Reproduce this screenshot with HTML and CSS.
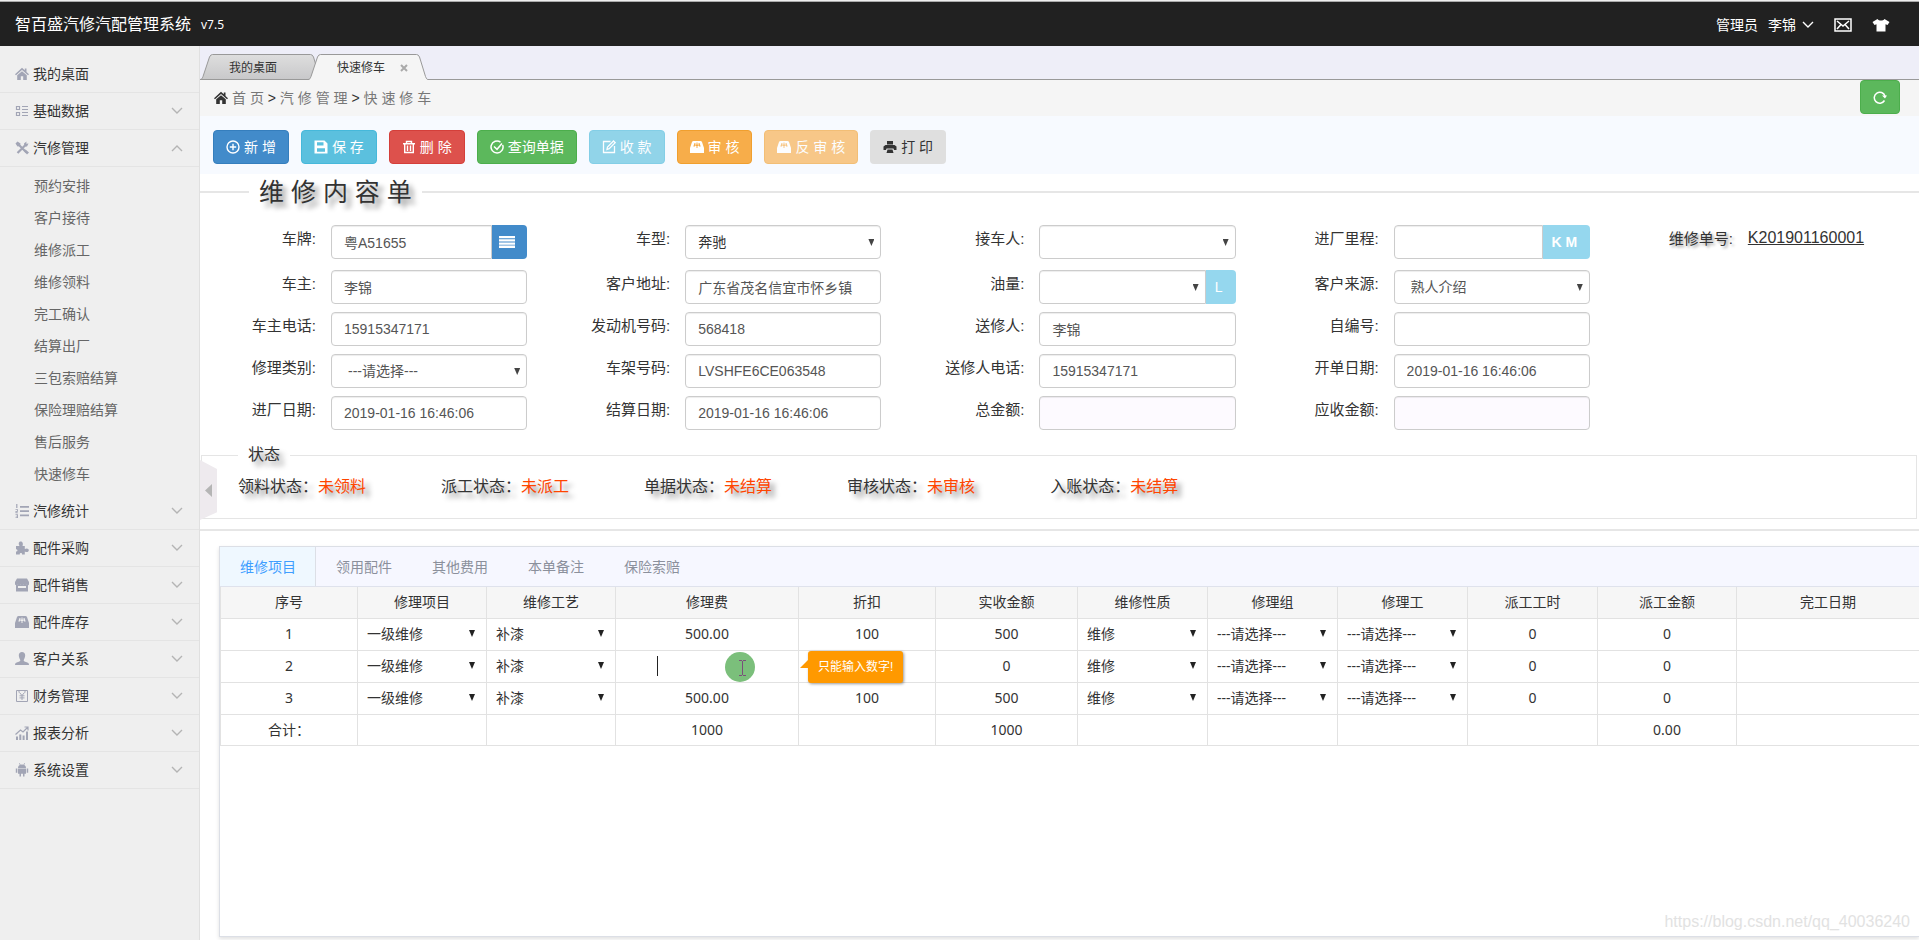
FILE: index.html
```html
<!DOCTYPE html>
<html lang="zh-CN">
<head>
    <meta charset="UTF-8">
    <meta name="viewport" content="width=device-width, initial-scale=1.0">
    <title>智百盛汽修汽配管理系统</title>
    <link rel="stylesheet" href="styles.css">
</head>
<body>
    <!-- 图标 -->
    <svg class="sprite" aria-hidden="true">
        <symbol id="i-home" viewBox="0 0 14 14"><path d="M7 0.8 0 7.2l1 1L7 3l6 5.200 1-1-2.500-2.300V1.500H9.800v1.800z"/><path d="M7 4.200 2.200 8.300V13h3.600V9.300h2.400V13h3.600V8.300z"/></symbol>
        <symbol id="i-data" viewBox="0 0 14 14"><path fill="none" stroke="currentColor" stroke-width="1.200" d="M1.500 2.500h3v3h-3zM1.500 8.500h3v3h-3zM7 2.500h6M7 5.500h6M7 8.500h6M7 11.500h6"/></symbol>
        <symbol id="i-tools" viewBox="0 0 14 14"><path fill="none" stroke="currentColor" stroke-width="2.200" d="M3 3l8.500 8.500M11 3.500 2.500 12"/><path d="M0.500 2.500 2.500 0.500 5.500 2.500 5 5 2.500 5.500zM9 2.500 11.500 0.500 11.300 2.700 13.500 2.500 12 5.500 9.500 5.500zM9 10l1.500-1.500 3.500 3-2 2z"/></symbol>
        <symbol id="i-list" viewBox="0 0 14 14"><path d="M5 2h9v1.800H5zM5 6.200h9V8H5zM5 10.500h9v1.800H5zM1.200 0h1.200v4H1.200zM0.500 5.200h2.500v2.500H1.500v.8H3v.8H.5V7h1.600v-.9H.5zM.5 10.300H3V14H.5v-.8h1.600v-.7H.8v-.8h1.300v-.6H.5z"/></symbol>
        <symbol id="i-puzzle" viewBox="0 0 14 14"><path d="M1 5h3.500C3 2.500 4 0.500 5.700 0.500S8.500 2.500 7.500 5h2.300v3c2-1.200 4-.5 4 1.300s-2 2.300-4 1.200V13.500H7c.7-2-2.800-2-2.200 0H1v-3c2 .6 2-2.900 0-2.300z"/></symbol>
        <symbol id="i-shop" viewBox="0 0 14 14"><path d="M2 0.500h10L14 4v2.500c-1 1.200-2.200 1-2.800 0-.8 1.200-2 1-2.800 0-.8 1-2 1-2.800 0-.8 1-2 1.200-2.800 0-.8 1-2.100.8-2.800 0V4z"/><path fill-rule="evenodd" d="M1 6.500h12v7H1zM3 8v2h8V8z"/></symbol>
        <symbol id="i-box" viewBox="0 0 14 14"><path fill-rule="evenodd" d="M3.500 1h7q1 0 1.500 1l2 6v5H0V8l2-6q.5-1 1.500-1zM4.500 3 3.300 6.500h1.700L5.500 3zM8.500 3 9 6.500h1.700L9.500 3zM6.500 2.500v2h-1V6h1v2h1V6h1V4.500h-1v-2z"/></symbol>
        <symbol id="i-user" viewBox="0 0 14 14"><path d="M7 0c2 0 3.200 1.300 3.200 3.300S9 7.500 8.700 8.200c0 1 .8 1.300 2.300 1.800 2 .6 3 1.200 3 3H0c0-1.800 1-2.400 3-3 1.500-.5 2.300-.8 2.300-1.800C5 7.500 3.800 5.300 3.800 3.300S5 0 7 0z"/></symbol>
        <symbol id="i-money" viewBox="0 0 14 14"><path fill="none" stroke="currentColor" d="M1.500 1.500h11v11h-11zM4.500 3.500 7 6.500l2.500-3M7 6.500V11M4.500 6.800h5M4.500 8.900h5M4 1.500v2M10 1.500v2"/></symbol>
        <symbol id="i-chart" viewBox="0 0 14 14"><path d="M1 10.500h2V14H1zM4.300 8.500h2V14h-2zM7.600 9.500h2V14h-2zM11 5.500h2V14h-2z"/><path fill="none" stroke="currentColor" stroke-width="1.200" d="M.5 8.500 5.500 4l2.500 2 4.500-4.500M9.500 1H13v3.500"/></symbol>
        <symbol id="i-robot" viewBox="0 0 14 14"><path d="M3 5a4 3.500 0 0 1 8 0zM3 5.600h8v5.200H9.500V13.500H8v-2.700H6v2.700H4.500v-2.700H3zM.8 5.500h1.500v4.200H.8zM11.700 5.500h1.500v4.200h-1.500zM4 .5l.6-.4 1 1.700-.7.3zM10 .5 9.400.1l-1 1.700.7.3z"/></symbol>
        <symbol id="i-down" viewBox="0 0 12 8"><path fill="none" stroke="currentColor" stroke-width="1.400" d="M1 1l5 5 5-5"/></symbol>
        <symbol id="i-up" viewBox="0 0 12 8"><path fill="none" stroke="currentColor" stroke-width="1.400" d="M1 7l5-5 5 5"/></symbol>
        <symbol id="i-mail" viewBox="0 0 18 14"><path fill="none" stroke="currentColor" stroke-width="1.500" d="M1 1h16v12H1zM3 3l6 5 6-5M3 11l4-4.500M15 11l-4-4.500"/></symbol>
        <symbol id="i-shirt" viewBox="0 0 18 14"><path d="M5.500 1C7 3 11 3 12.500 1L17.500 4 15.500 7 13.500 6.200V13.500h-9V6.200L2.500 7 .5 4z"/></symbol>
        <symbol id="i-plus" viewBox="0 0 14 14"><g fill="none" stroke="currentColor" stroke-width="1.400"><circle cx="7" cy="7" r="6"/><path d="M7 3.800v6.400M3.800 7h6.400"/></g></symbol>
        <symbol id="i-save" viewBox="0 0 14 14"><path fill-rule="evenodd" d="M.5.5h10L13.500 3.500v10H.5zM3 2.200v3.300h6.500V2.200zM3 8.200v3.600h8V8.200z"/></symbol>
        <symbol id="i-trash" viewBox="0 0 14 14"><g fill="none" stroke="currentColor" stroke-width="1.400"><path d="M1 3.700h12M4.500 3.500V1.500h5v2M2.700 4v8.500h8.600V4M5.500 5.500v5.500M8.500 5.500v5.500"/></g></symbol>
        <symbol id="i-check" viewBox="0 0 14 14"><g fill="none" stroke="currentColor" stroke-width="1.500"><path d="M12.700 5A6 6 0 1 1 10.500 2.100"/><path d="M4 6.500 7 9.300 12 3.500"/></g></symbol>
        <symbol id="i-edit" viewBox="0 0 14 14"><g fill="none" stroke="currentColor" stroke-width="1.300"><path d="M8.500 1.500h-7v11h11V6"/><path d="M5 9.500 5.500 7 11.500 1l1.700 1.700-6 6z"/></g></symbol>
        <symbol id="i-print" viewBox="0 0 14 14"><path fill-rule="evenodd" d="M4 1h6v3.500H4zM2.500 5h9L13.500 6.500V10h-2.500L10.500 8.500h-7L3 10H.5V6.500zM4.500 9.500h5l1 3.500h-7z"/></symbol>
        <symbol id="i-rows" viewBox="0 0 16 12"><path d="M0 0h16v2.300H0zM0 3.200h16v2.300H0zM0 6.400h16v2.300H0zM0 9.600h16V12H0z"/></symbol>
        <symbol id="i-refresh" viewBox="0 0 14 14"><path fill="none" stroke="currentColor" stroke-width="1.500" d="M11.500 10.500A5.500 5.500 0 1 1 12 6"/><path d="M9 5.500h5L12 8.500z"/></symbol>
    </svg>

    <header class="header">
        <h1 class="logo">智百盛汽修汽配管理系统</h1>
        <span class="version">v7.5</span>
        <nav class="user-nav">
            <span>管理员</span>
            <a href="#">李锦 <svg class="arrow"><use href="#i-down"/></svg></a>
            <a href="#" aria-label="消息"><svg class="tool"><use href="#i-mail"/></svg></a>
            <a href="#" aria-label="换肤"><svg class="tool"><use href="#i-shirt"/></svg></a>
        </nav>
    </header>

    <div class="wrapper">
        <aside class="sidebar">
            <a class="menu-item" href="#"><svg class="icon"><use href="#i-home"/></svg>我的桌面</a>
            <a class="menu-item" href="#"><svg class="icon"><use href="#i-data"/></svg>基础数据<svg class="arrow"><use href="#i-down"/></svg></a>
            <a class="menu-item" href="#"><svg class="icon"><use href="#i-tools"/></svg>汽修管理<svg class="arrow"><use href="#i-up"/></svg></a>
            <ul class="submenu">
                <li><a href="#">预约安排</a></li>
                <li><a href="#">客户接待</a></li>
                <li><a href="#">维修派工</a></li>
                <li><a href="#">维修领料</a></li>
                <li><a href="#">完工确认</a></li>
                <li><a href="#">结算出厂</a></li>
                <li><a href="#">三包索赔结算</a></li>
                <li><a href="#">保险理赔结算</a></li>
                <li><a href="#">售后服务</a></li>
                <li><a href="#">快速修车</a></li>
            </ul>
            <a class="menu-item" href="#"><svg class="icon"><use href="#i-list"/></svg>汽修统计<svg class="arrow"><use href="#i-down"/></svg></a>
            <a class="menu-item" href="#"><svg class="icon"><use href="#i-puzzle"/></svg>配件采购<svg class="arrow"><use href="#i-down"/></svg></a>
            <a class="menu-item" href="#"><svg class="icon"><use href="#i-shop"/></svg>配件销售<svg class="arrow"><use href="#i-down"/></svg></a>
            <a class="menu-item" href="#"><svg class="icon"><use href="#i-box"/></svg>配件库存<svg class="arrow"><use href="#i-down"/></svg></a>
            <a class="menu-item" href="#"><svg class="icon"><use href="#i-user"/></svg>客户关系<svg class="arrow"><use href="#i-down"/></svg></a>
            <a class="menu-item" href="#"><svg class="icon"><use href="#i-money"/></svg>财务管理<svg class="arrow"><use href="#i-down"/></svg></a>
            <a class="menu-item" href="#"><svg class="icon"><use href="#i-chart"/></svg>报表分析<svg class="arrow"><use href="#i-down"/></svg></a>
            <a class="menu-item" href="#"><svg class="icon"><use href="#i-robot"/></svg>系统设置<svg class="arrow"><use href="#i-down"/></svg></a>
        </aside>

        <main class="main">
            <button class="collapse" type="button" aria-label="收起菜单"></button>

            <div class="page-tabs">
                <a class="page-tab" href="#">
                    <svg class="tab-shape" viewBox="0 0 120 26"><defs><linearGradient id="tabFill" x2="0" y2="1"><stop offset="0" stop-color="#dedede"/><stop offset="1" stop-color="#c8c8ca"/></linearGradient></defs><path fill="url(#tabFill)" stroke="#999" d="M0 25.500c2 0 2-1 3-3L9.500 3q1-2.500 3-2.500h98q2 0 3 2.500l6 20q1 2 1 2.500z"/></svg>
                    <span>我的桌面</span>
                </a>
                <a class="page-tab active" href="#">
                    <svg class="tab-shape" viewBox="0 0 120 26"><path fill="#f5f5f5" stroke="#999" d="M0 25.500c2 0 2-1 3-3L9.500 3q1-2.500 3-2.500h96q2 0 3 2.500l6 19.500c1 2 1 3 3 3V27H0z"/></svg>
                    <span>快速修车</span>
                    <svg class="tab-close" viewBox="0 0 8 8"><path fill="none" stroke="#aaa" stroke-width="2" d="M1 1l6 6M7 1 1 7"/></svg>
                </a>
            </div>

            <div class="breadcrumb">
                <svg class="icon"><use href="#i-home"/></svg>
                <span>首 页 <b>&gt;</b> 汽 修 管 理 <b>&gt;</b> 快 速 修 车</span>
                <button class="btn btn-success refresh" type="button" aria-label="刷新"><svg class="icon"><use href="#i-refresh"/></svg></button>
            </div>

            <div class="toolbar">
                <button class="btn btn-primary" type="button"><svg class="icon"><use href="#i-plus"/></svg>新 增</button>
                <button class="btn btn-info" type="button"><svg class="icon"><use href="#i-save"/></svg>保 存</button>
                <button class="btn btn-danger" type="button"><svg class="icon"><use href="#i-trash"/></svg>删 除</button>
                <button class="btn btn-success" type="button"><svg class="icon"><use href="#i-check"/></svg>查询单据</button>
                <button class="btn btn-info" type="button" disabled><svg class="icon"><use href="#i-edit"/></svg>收 款</button>
                <button class="btn btn-warning" type="button"><svg class="icon"><use href="#i-box"/></svg>审 核</button>
                <button class="btn btn-warning" type="button" disabled><svg class="icon"><use href="#i-box"/></svg>反 审 核</button>
                <button class="btn btn-default" type="button"><svg class="icon"><use href="#i-print"/></svg>打 印</button>
            </div>

            <form class="order">
                <div class="order-title"><h2>维 修 内 容 单</h2></div>

                <div class="form-grid first">
                    <div class="field">
                        <label for="plate">车牌:</label>
                        <div class="group">
                            <input class="control" type="text" id="plate" value="粤A51655">
                            <button class="addon addon-primary" type="button" aria-label="选择车牌"><svg><use href="#i-rows"/></svg></button>
                        </div>
                    </div>
                    <div class="field">
                        <label for="model">车型:</label>
                        <div class="select dark"><select class="control" id="model"><option>奔驰</option></select></div>
                    </div>
                    <div class="field">
                        <label for="receiver">接车人:</label>
                        <div class="select"><select class="control" id="receiver"><option></option></select></div>
                    </div>
                    <div class="field">
                        <label for="mileage">进厂里程:</label>
                        <div class="group">
                            <input class="control" type="text" id="mileage">
                            <span class="addon addon-km">K M</span>
                        </div>
                    </div>
                    <div class="field">
                        <span class="label shadow">维修单号:</span>
                        <a class="order-no" href="#">K201901160001</a>
                    </div>
                </div>

                <div class="form-grid">
                    <div class="field">
                        <label for="owner">车主:</label>
                        <input class="control" type="text" id="owner" value="李锦">
                    </div>
                    <div class="field">
                        <label for="address">客户地址:</label>
                        <input class="control" type="text" id="address" value="广东省茂名信宜市怀乡镇">
                    </div>
                    <div class="field">
                        <label for="oil">油量:</label>
                        <div class="group">
                            <div class="select"><select class="control" id="oil"><option></option></select></div>
                            <span class="addon addon-l">L</span>
                        </div>
                    </div>
                    <div class="field">
                        <label for="source">客户来源:</label>
                        <div class="select"><select class="control" id="source"><option>熟人介绍</option></select></div>
                    </div>
                </div>

                <div class="form-grid">
                    <div class="field">
                        <label for="ownerTel">车主电话:</label>
                        <input class="control" type="text" id="ownerTel" value="15915347171">
                    </div>
                    <div class="field">
                        <label for="engine">发动机号码:</label>
                        <input class="control" type="text" id="engine" value="568418">
                    </div>
                    <div class="field">
                        <label for="sender">送修人:</label>
                        <input class="control" type="text" id="sender" value="李锦">
                    </div>
                    <div class="field">
                        <label for="selfNo">自编号:</label>
                        <input class="control" type="text" id="selfNo">
                    </div>
                </div>

                <div class="form-grid">
                    <div class="field">
                        <label for="repairType">修理类别:</label>
                        <div class="select"><select class="control" id="repairType"><option>---请选择---</option></select></div>
                    </div>
                    <div class="field">
                        <label for="vin">车架号码:</label>
                        <input class="control" type="text" id="vin" value="LVSHFE6CE063548">
                    </div>
                    <div class="field">
                        <label for="senderTel">送修人电话:</label>
                        <input class="control" type="text" id="senderTel" value="15915347171">
                    </div>
                    <div class="field">
                        <label for="openDate">开单日期:</label>
                        <input class="control" type="text" id="openDate" value="2019-01-16 16:46:06">
                    </div>
                </div>

                <div class="form-grid">
                    <div class="field">
                        <label for="inDate">进厂日期:</label>
                        <input class="control" type="text" id="inDate" value="2019-01-16 16:46:06">
                    </div>
                    <div class="field">
                        <label for="settleDate">结算日期:</label>
                        <input class="control" type="text" id="settleDate" value="2019-01-16 16:46:06">
                    </div>
                    <div class="field">
                        <label for="total">总金额:</label>
                        <input class="control readonly" type="text" id="total" readonly>
                    </div>
                    <div class="field">
                        <label for="receivable">应收金额:</label>
                        <input class="control readonly" type="text" id="receivable" readonly>
                    </div>
                </div>

                <fieldset class="status">
                    <legend>状态</legend>
                    <div class="status-list">
                        <span>领料状态：<em>未领料</em></span>
                        <span>派工状态：<em>未派工</em></span>
                        <span>单据状态：<em>未结算</em></span>
                        <span>审核状态：<em>未审核</em></span>
                        <span>入账状态：<em>未结算</em></span>
                    </div>
                </fieldset>
            </form>

            <section class="panel">
                <div class="panel-tabs">
                    <a class="active" href="#">维修项目</a>
                    <a href="#">领用配件</a>
                    <a href="#">其他费用</a>
                    <a href="#">本单备注</a>
                    <a href="#">保险索赔</a>
                </div>
                <table class="items">
                    <colgroup>
                        <col class="w-no"><col class="w-sel"><col class="w-sel"><col class="w-fee"><col class="w-no"><col class="w-amt">
                        <col class="w-mid"><col class="w-mid"><col class="w-mid"><col class="w-mid"><col class="w-pay"><col>
                    </colgroup>
                    <thead>
                        <tr>
                            <th>序号</th><th>修理项目</th><th>维修工艺</th><th>修理费</th><th>折扣</th><th>实收金额</th>
                            <th>维修性质</th><th>修理组</th><th>修理工</th><th>派工工时</th><th>派工金额</th><th>完工日期</th>
                        </tr>
                    </thead>
                    <tbody>
                        <tr>
                            <td>1</td>
                            <td><div class="select"><select aria-label="修理项目"><option>一级维修</option></select></div></td>
                            <td><div class="select"><select aria-label="维修工艺"><option>补漆</option></select></div></td>
                            <td><input class="fee" type="text" value="500.00" aria-label="修理费"></td>
                            <td>100</td>
                            <td>500</td>
                            <td><div class="select"><select aria-label="维修性质"><option>维修</option></select></div></td>
                            <td><div class="select"><select aria-label="修理组"><option>---请选择---</option></select></div></td>
                            <td><div class="select"><select aria-label="修理工"><option>---请选择---</option></select></div></td>
                            <td>0</td>
                            <td>0</td>
                            <td></td>
                        </tr>
                        <tr>
                            <td>2</td>
                            <td><div class="select"><select aria-label="修理项目"><option>一级维修</option></select></div></td>
                            <td><div class="select"><select aria-label="维修工艺"><option>补漆</option></select></div></td>
                            <td class="editing">
                                <input class="fee current" type="text" aria-label="修理费">
                                <svg class="pointer" viewBox="0 0 30 30"><circle cx="15" cy="15" r="15" fill="#7bbf7b"/><path fill="none" stroke="#7a4f7a" d="M14 8.500h3m1 0h3M17.500 9v14M14 23.500h3m1 0h3"/></svg>
                                <div class="tip">只能输入数字!</div>
                            </td>
                            <td></td>
                            <td>0</td>
                            <td><div class="select"><select aria-label="维修性质"><option>维修</option></select></div></td>
                            <td><div class="select"><select aria-label="修理组"><option>---请选择---</option></select></div></td>
                            <td><div class="select"><select aria-label="修理工"><option>---请选择---</option></select></div></td>
                            <td>0</td>
                            <td>0</td>
                            <td></td>
                        </tr>
                        <tr>
                            <td>3</td>
                            <td><div class="select"><select aria-label="修理项目"><option>一级维修</option></select></div></td>
                            <td><div class="select"><select aria-label="维修工艺"><option>补漆</option></select></div></td>
                            <td><input class="fee" type="text" value="500.00" aria-label="修理费"></td>
                            <td>100</td>
                            <td>500</td>
                            <td><div class="select"><select aria-label="维修性质"><option>维修</option></select></div></td>
                            <td><div class="select"><select aria-label="修理组"><option>---请选择---</option></select></div></td>
                            <td><div class="select"><select aria-label="修理工"><option>---请选择---</option></select></div></td>
                            <td>0</td>
                            <td>0</td>
                            <td></td>
                        </tr>
                    </tbody>
                    <tfoot>
                        <tr>
                            <td>合计：</td><td></td><td></td><td>1000</td><td></td><td>1000</td>
                            <td></td><td></td><td></td><td></td><td>0.00</td><td></td>
                        </tr>
                    </tfoot>
                </table>
            </section>
            <div class="watermark">https://blog.csdn.net/qq_40036240</div>
        </main>
    </div>
</body>
</html>
```

FILE: styles.css
```css
* {
    box-sizing: border-box;
    margin: 0;
    padding: 0;
}
body {
    display: flex;
    flex-direction: column;
    min-height: 100vh;
    font-family: "Liberation Sans", "Noto Sans CJK SC", sans-serif;
    font-size: 14px;
    line-height: 20px;
    color: #333;
    background-color: #fff;
}
a {
    color: inherit;
    text-decoration: none;
}
input, select, button {
    font: inherit;
    color: inherit;
}
svg {
    fill: currentColor;
    flex-shrink: 0;
}
.sprite {
    position: absolute;
    width: 0;
    height: 0;
}
.icon {
    width: 14px;
    height: 14px;
}
.arrow {
    width: 12px;
    height: 8px;
}

/* 顶部 */
.header {
    display: flex;
    align-items: center;
    height: 46px;
    padding: 2px 29px 0 15px;
    border-top: 1px solid #eee;
    box-shadow: inset 0 1px #aaa;
    background-color: #212121;
    color: #fff;
}
.logo {
    font-size: 16px;
    font-weight: normal;
}
.version {
    margin-left: 10px;
    font-family: "Noto Sans", sans-serif;
    font-size: 12px;
}
.user-nav {
    display: flex;
    align-items: center;
    gap: 10px;
    margin-left: auto;
}
.user-nav a {
    display: flex;
    align-items: center;
    gap: 6px;
}
.user-nav .tool {
    width: 18px;
    height: 14px;
    margin-left: 10px;
}

.wrapper {
    display: flex;
    flex: 1;
}

/* 左侧菜单 */
.sidebar {
    width: 200px;
    flex-shrink: 0;
    padding-top: 10px;
    background-color: #efefef;
    border-right: 1px solid #e0e0e0;
}
.menu-item {
    display: flex;
    align-items: center;
    height: 37px;
    padding: 0 16px 0 15px;
    border-bottom: 1px solid #e4e4e4;
}
.menu-item .icon {
    margin-right: 4px;
    color: #a2a5b5;
}
.menu-item .arrow {
    margin-left: auto;
    color: #b4b4b4;
}
.submenu {
    list-style: none;
    padding: 3px 0;
}
.submenu a {
    display: block;
    padding-left: 34px;
    line-height: 32px;
    color: #666;
}

.main {
    position: relative;
    display: flex;
    flex-direction: column;
    flex: 1;
    min-width: 0;
    padding-bottom: 3px;
    background-color: #fff;
}
.collapse {
    position: absolute;
    left: 0;
    top: 414px;
    width: 17px;
    height: 60px;
    border: none;
    background-color: #eeeaee;
    clip-path: polygon(0 0, 100% 15%, 100% 87%, 0 100%);
}
.collapse::after {
    content: "";
    position: absolute;
    left: 5px;
    top: 24px;
    width: 7px;
    height: 13px;
    background-color: #b5b5b5;
    clip-path: polygon(100% 0, 100% 100%, 0 50%);
}

/* 页签 */
.page-tabs {
    display: flex;
    align-items: flex-end;
    height: 34px;
    background-color: #eeeef8;
    border-bottom: 1px solid #999;
}
.page-tab {
    position: relative;
    display: flex;
    align-items: center;
    width: 120px;
    height: 26px;
    margin-bottom: -1px;
    padding: 2px 0 0 29px;
    font-size: 12px;
}
.page-tab.active {
    margin-left: -12px;
}
.page-tab span {
    position: relative;
}
.tab-shape {
    position: absolute;
    left: 0;
    top: 0;
    width: 120px;
    height: 26px;
}
.tab-close {
    position: relative;
    width: 8px;
    height: 8px;
    margin-left: 15px;
}

.breadcrumb {
    display: flex;
    align-items: center;
    height: 36px;
    padding: 0 19px 0 14px;
    background-color: #f5f5f5;
    color: #777;
}
.breadcrumb > .icon {
    margin-right: 4px;
    color: #333;
}
.breadcrumb b {
    font-weight: normal;
    color: #333;
}

/* 按钮 */
.toolbar {
    display: flex;
    gap: 12px;
    padding: 14px 13px 10px;
    background-color: #f7faff;
}
.btn {
    display: inline-flex;
    align-items: center;
    justify-content: center;
    gap: 4px;
    height: 34px;
    padding: 0 12px;
    border: 1px solid transparent;
    border-radius: 4px;
    color: #fff;
}
.btn:disabled {
    opacity: 0.65;
}
.btn-primary {
    background-color: #428bca;
    border-color: #357ebd;
}
.btn-info {
    background-color: #5bc0de;
    border-color: #46b8da;
}
.btn-danger {
    background-color: #dd514c;
    border-color: #d43f3a;
}
.btn-success {
    background-color: #5cb85c;
    border-color: #4cae4c;
}
.btn-warning {
    background-color: #f7ad4a;
    border-color: #f09f2e;
}
.btn-default {
    background-color: #dfdfdf;
    color: #333;
}
.refresh {
    width: 40px;
    margin-left: auto;
    margin-bottom: 2px;
}

/* 单据表单 */
.order {
    padding-bottom: 10px;
    border-bottom: 2px solid #e6e6e6;
}
.order-title {
    display: flex;
    align-items: center;
    height: 36px;
    margin-bottom: 15px;
}
.order-title::before,
.order-title::after {
    content: "";
    width: 49px;
    height: 2px;
    background-color: #e6e6e6;
}
.order-title::after {
    flex: 1;
}
.order-title h2 {
    padding: 0 10px;
    font-size: 25px;
    line-height: 36px;
    font-weight: normal;
    text-shadow: 5px 5px 5px #999;
}
.form-grid {
    display: grid;
    grid-template-columns: repeat(4, 354fr) 302fr;
    margin-bottom: 8px;
}
.form-grid.first {
    margin-bottom: 11px;
}
.field {
    display: grid;
    grid-template-columns: 116px minmax(0, 1fr);
    column-gap: 15px;
    padding-right: 27px;
}
.field label,
.field .label {
    font-size: 15px;
    line-height: 28px;
    text-align: right;
}
.field .shadow {
    text-shadow: 2px 2px 3px #999;
}
.order-no {
    font-size: 16px;
    line-height: 26px;
    text-decoration: underline;
}
.control {
    width: 100%;
    height: 34px;
    padding: 0 12px;
    border: 1px solid #ccc;
    border-radius: 4px;
    background-color: #fff;
    box-shadow: inset 0 1px 1px rgba(0, 0, 0, 0.075);
    color: #555;
}
.control.readonly {
    background-color: #fdfaff;
}
.select {
    position: relative;
    width: 100%;
}
.select select {
    appearance: none;
    outline: none;
}
.select select.control {
    padding-left: 16px;
}
.select.dark select.control {
    padding-left: 12px;
    color: #333;
}
.select::after {
    content: "";
    position: absolute;
    right: 7px;
    top: 14px;
    width: 6px;
    height: 7px;
    background-color: #444;
    clip-path: polygon(0 0, 100% 0, 50% 100%);
    pointer-events: none;
}
.group {
    display: flex;
}
.group .control {
    border-radius: 4px 0 0 4px;
}
.addon {
    display: flex;
    align-items: center;
    justify-content: center;
    flex-shrink: 0;
    height: 34px;
    border: none;
    border-radius: 0 4px 4px 0;
    background-color: #95d7ee;
    color: #fff;
}
.addon-primary {
    width: 35px;
    padding-right: 5px;
    background-color: #428bca;
}
.addon-primary svg {
    width: 16px;
    height: 12px;
}
.addon-km {
    width: 47px;
    padding-right: 4px;
    font-weight: bold;
}
.addon-l {
    width: 30px;
    padding-right: 4px;
}

/* 状态 */
.status {
    margin: 14px 2px 0 1px;
    padding: 0 0 20px 36px;
    border: 1px solid #e5e5e5;
}
.status legend {
    padding: 0 10px;
    font-size: 16px;
    line-height: 22px;
    text-shadow: 5px 5px 5px #999;
}
.status-list {
    display: flex;
    gap: 75px;
    padding-top: 10px;
    font-size: 16px;
    line-height: 22px;
    text-shadow: 5px 5px 5px #999;
}
.status em {
    font-style: normal;
    color: #ff4500;
}

/* 明细 */
.panel {
    flex: 1;
    margin: 15px 0 0 19px;
    border: 1px solid #dcdfe6;
    border-right: none;
    box-shadow: 0 2px 4px rgba(0, 0, 0, 0.12);
}
.panel-tabs {
    display: flex;
    height: 40px;
    background-color: #f6f7ff;
    border-bottom: 1px solid #dfe2ec;
}
.panel-tabs a {
    padding: 0 20px;
    line-height: 40px;
    white-space: nowrap;
    color: #8b909c;
}
.panel-tabs .active {
    padding-right: 19px;
    background-color: #eff8ff;
    border-right: 1px solid #dcdfe6;
    color: #409eff;
}
.items {
    width: 100%;
    table-layout: fixed;
    border-collapse: collapse;
    font-family: "Noto Sans", "Noto Sans CJK SC", sans-serif;
}
.items th,
.items td {
    height: 32px;
    border: 1px solid #e2e2e2;
    border-top: none;
    font-weight: normal;
    text-align: center;
}
.items th,
.items tfoot td {
    height: 31px;
}
.items th {
    background-color: #f6f6f6;
}
.items th:last-child,
.items td:last-child {
    border-right: none;
}
.w-no { width: 137px; }
.w-sel { width: 129px; }
.w-fee { width: 183px; }
.w-amt { width: 142px; }
.w-mid { width: 130px; }
.w-pay { width: 139px; }
.items select {
    display: block;
    width: 100%;
    height: 30px;
    padding-left: 9px;
    border: none;
    background-color: transparent;
}
.items .select::after {
    right: 11px;
    top: 11px;
    background-color: #222;
}
.fee {
    width: 100px;
    height: 20px;
    border: none;
    outline: none;
    background-color: transparent;
    text-align: center;
}
.fee.current {
    display: block;
    margin: 0 auto;
    border-left: 1px solid #222;
}
.editing {
    position: relative;
}
.pointer {
    position: absolute;
    left: 109px;
    top: 1px;
    width: 30px;
    height: 30px;
}
.tip {
    position: absolute;
    left: 192px;
    top: 0;
    z-index: 1;
    padding: 6px 10px;
    border-radius: 3px;
    background-color: #ff9900;
    box-shadow: 1px 1px 3px rgba(0, 0, 0, 0.4);
    color: #fff;
    font-family: "Liberation Sans", "Noto Sans CJK SC", sans-serif;
    font-size: 12px;
    white-space: nowrap;
}
.tip::before {
    content: "";
    position: absolute;
    left: -8px;
    top: 9px;
    border-left: 8px solid transparent;
    border-bottom: 8px solid #ff9900;
}
.watermark {
    position: absolute;
    right: 9px;
    bottom: 8px;
    font-size: 16px;
    color: #e2e2e2;
}
```
